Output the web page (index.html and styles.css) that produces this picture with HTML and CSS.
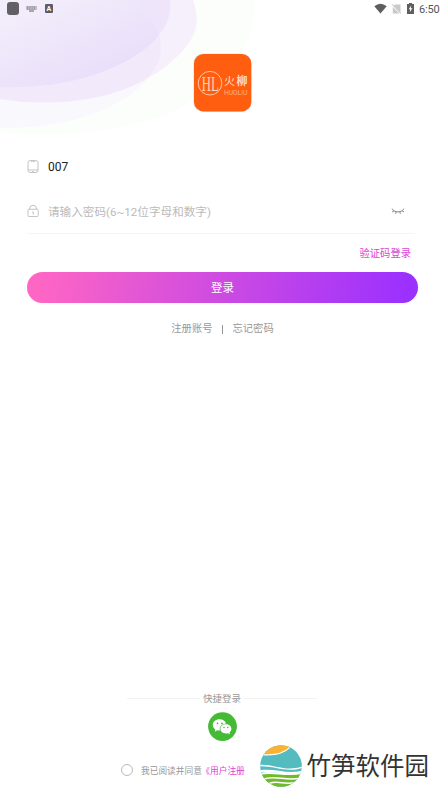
FILE: index.html
```
<!DOCTYPE html>
<html lang="zh-CN">
<head>
<meta charset="utf-8">
<title>登录</title>
<link rel="stylesheet" href="styles.css">
</head>
<body>
<div class="screen">
  <svg class="backdrop" width="270" height="140" viewBox="0 0 270 140" aria-hidden="true">
    <defs>
      <linearGradient id="inner" gradientUnits="userSpaceOnUse" x1="45" y1="-10" x2="85" y2="80">
        <stop offset="0" stop-color="#f3eefb"/><stop offset="1" stop-color="#eadffa"/>
      </linearGradient>
    </defs>
    <path fill="#fcfefc" d="M0 0H254C259 40 227 84 178 109C125 135 50 137 0 132Z"/>
    <path fill="#f9f8fd" d="M0 0H134C151 15 161 30 161 47C161 91 88 128 10 128H0Z"/>
    <path fill="#f6effc" d="M0 0H193C202 26 195 43 165 67C136 90 72 110 0 99Z"/>
    <path fill="#f2e9fb" d="M0 0H134C151 15 161 30 161 47C161 61 154 71 145 80C105 102 50 107 0 99Z"/>
    <path fill="#eee5fa" d="M0 0H170C173 22 158 41 133 57C101 77 52 89 0 87Z"/>
    <path fill="url(#inner)" d="M0 0H134C145 9 155 22 159 35Q151 46 133 57C101 77 52 89 0 87Z"/>
  </svg>

  <header class="status">
    <div class="status-group">
      <span class="app-chip"></span>
      <svg class="keyboard" width="11" height="6" viewBox="0 0 11 6"><path d="M.5 1H10.5M.5 3H10.5" stroke="#77747c" stroke-width="1.4" stroke-dasharray="1.4 .5"/><path d="M3 5H8" stroke="#77747c" stroke-width="1.2"/></svg>
      <svg width="8" height="9" viewBox="0 0 8 9"><rect width="8" height="9" rx="1" fill="#5f5d63"/><text x="1.4" y="7" class="badge-letter">A</text></svg>
    </div>
    <div class="status-group right">
      <svg width="13" height="11" viewBox="0 0 13 11"><path d="M.3 3.2Q6.5-1.8 12.7 3.2L6.5 10.5Z" fill="#5e5e5e"/></svg>
      <svg class="sim" width="9" height="10" viewBox="0 0 9 10"><path d="M3 .5H8.5V9.5H.8V3Z" fill="#c9c9c9"/><path d="M0 .8L8.8 10" stroke="#fff" stroke-width="1.6"/><path d="M0 .2L9 9.7" stroke="#aaa" stroke-width=".8"/></svg>
      <svg class="battery" width="7" height="11" viewBox="0 0 7 11"><path d="M2 0H5V1H7V11H0V1H2Z" fill="#5e5e5e"/><path d="M4.2 2.6L1.7 6.2H3.2L2.8 9.2L5.4 5.3H3.8Z" fill="#fff"/></svg>
      <span class="clock">6:50</span>
    </div>
  </header>

  <svg class="app-logo" width="60" height="60" viewBox="0 0 60 60">
    <rect x="1.3" y=".5" width="58.4" height="58.6" rx="10" fill="#e9e9e9"/>
    <rect x="2" y="1" width="57.3" height="57.4" rx="9.5" fill="#ff5e10"/>
    <circle cx="18" cy="30.2" r="11.8" fill="none" stroke="#ffd2b5" stroke-width=".9"/>
    <text x="9.8" y="37.6" textLength="17" lengthAdjust="spacingAndGlyphs" class="logo-mono">HL</text>
    <text x="32" y="32.4" textLength="23.5" class="logo-name">火<tspan class="strong">柳</tspan></text>
    <text x="32" y="41.6" textLength="23.4" lengthAdjust="spacingAndGlyphs" class="logo-text">HUOLIU</text>
  </svg>

  <main class="form">
    <div class="field account">
      <svg width="12" height="14" viewBox="0 0 12 14" fill="none" stroke="#c4c4c4"><rect x="1" y=".6" width="10" height="11.9" rx="2"/><path d="M1 10H11M4 1.3H8M5 11.8H7"/></svg>
      <span class="value">007</span>
    </div>
    <div class="field password">
      <svg width="12" height="14" viewBox="0 0 12 14" fill="none" stroke="#c4c4c4"><rect x="1" y="5.3" width="10.2" height="7.2" rx=".8"/><path d="M2.7 5.1V4Q3 1.3 6 1.3T9.3 4V5.1M5 8H6.3V10.7"/></svg>
      <span class="placeholder">请输入密码(6~12位字母和数字)</span>
      <svg class="eye" width="14" height="8" viewBox="0 0 14 8" fill="none" stroke="#888" stroke-width="1"><path d="M.8 1.6Q3 5 7 5T13.2 1.6M3.2 3.7L1 5M5.2 4.8L4.6 6.8M8.8 4.8L9.4 6.8M10.8 3.7L13 5"/></svg>
    </div>
    <a class="code-login">验证码登录</a>
    <button class="submit">登录</button>
    <nav class="links"><a>注册账号</a><i></i><a>忘记密码</a></nav>
  </main>

  <footer class="footer">
    <div class="quick"><i></i><span>快捷登录</span><i></i></div>
    <svg class="wechat" width="30" height="30" viewBox="0 0 30 30">
      <circle cx="15.5" cy="14.6" r="14.4" fill="#45ba35"/>
      <path fill="#fff" d="M12.6 7.2C8.6 7.2 5.8 9.7 5.8 12.9C5.8 14.8 6.8 16.3 8.3 17.4L7.7 19.7L10.2 18.3Q11.4 18.7 12.9 18.6C12 14.6 15 11.7 19.1 11.5C18.3 9 15.8 7.2 12.6 7.2Z"/>
      <path fill="#fff" d="M18.9 12.2C15.7 12.2 13.4 14.2 13.4 16.8C13.4 19.5 15.8 21.5 18.9 21.5Q20 21.5 21 21.2L23 22.3L22.5 20.3C23.8 19.4 24.4 18.2 24.4 16.8C24.4 14.2 22 12.2 18.9 12.2Z"/>
      <g fill="#45ba35"><circle cx="10.5" cy="11.3" r=".9"/><circle cx="15" cy="11.3" r=".9"/><circle cx="17" cy="15.5" r=".75"/><circle cx="20.7" cy="15.5" r=".75"/></g>
    </svg>
    <div class="bottom">
      <span class="radio"></span>
      <p class="agree">我已阅读并同意<b>《用户注册</b></p>
      <div class="brand">
        <svg width="42" height="42" viewBox="0 0 42 42">
          <defs><clipPath id="disc"><circle cx="21" cy="21" r="20.8"/></clipPath></defs>
          <g clip-path="url(#disc)">
            <rect width="42" height="42" fill="#54bbbf"/>
            <path fill="#f8b332" d="M0 0H34L30 3Q21 11 4 9.5H0Z"/>
            <path fill="none" stroke="#fff" stroke-width="1.2" d="M3 9.6Q21 11 29.5 2.6"/>
            <path fill="#fff" d="M0 19.7C14 19 26 27 42 21.5V23C27 28 15 21 0 21.3Z"/>
            <path fill="#fff" d="M0 25.2C14 23 27 29.5 42 25.8V27.5C27 31 15 26 0 27.3Z"/>
            <path fill="#72b92b" d="M0 29.5C14 25.5 25 31.5 42 27.8V42H0Z"/>
            <path fill="none" stroke="#fff" stroke-width="1.8" d="M0 28.8C14 25.8 25 31.5 42 28"/>
            <path fill="none" stroke="#fff" stroke-width="1.5" d="M3 34.2C16 29.5 25 36.5 40 33.2M9 38.5C18 35 24 40 35 37.5"/>
          </g>
        </svg>
        <span>竹笋软件园</span>
      </div>
    </div>
  </footer>
</div>
</body>
</html>
```
FILE: styles.css
```
* { box-sizing: border-box; }
body { margin: 0; background: #fff; font-family: Roboto, "Noto Sans CJK SC", sans-serif; }
svg { display: block; flex: none; }
.screen { position: relative; width: 445px; height: 791px; display: flex; flex-direction: column; overflow: hidden; }
.backdrop { position: absolute; left: 0; top: 0; z-index: -1; }

.status { height: 18px; padding: 0 6px 0 7px; display: flex; justify-content: space-between; align-items: center; }
.status-group { display: flex; align-items: center; margin-top: -1px; }
.app-chip { width: 12px; height: 13px; border-radius: 3px; background: #626066; }
.keyboard { margin: 0 8px 0 7px; }
.badge-letter { font: 700 7px Roboto, sans-serif; fill: #fff; }
.right .sim { margin: 0 6px 0 5px; }
.battery { margin-right: 5px; }
.clock { font-size: 11px; line-height: 16px; padding-top: 2px; width: 20px; letter-spacing: -.2px; color: #555; white-space: nowrap; }

.app-logo { margin: 35px 0 0 192px; }
.logo-mono { font: 20px "Liberation Serif", serif; fill: #ffd2b5; }
.logo-name { font: 11px "Noto Sans CJK SC", sans-serif; fill: #ffdcc5; }
.strong { font-weight: 700; }
.logo-text { font: 7px Roboto, sans-serif; fill: #ffb083; }

.form { margin: 36px 27px 0; display: flex; flex-direction: column; }
.field { display: flex; align-items: center; gap: 9px; }
.account { height: 36px; }
.value { font-size: 12px; color: #222; }
.password { height: 49px; margin-right: 3px; padding-top: 4px; border-bottom: 1px solid #f5f5f5; }
.placeholder { font-size: 11.6px; color: #bbb; white-space: nowrap; }
.eye { margin: 0 10px 0 auto; }
.code-login { align-self: flex-end; margin: 11px 7px 0 0; font-size: 10.3px; line-height: 18px; color: #dc43d4; }
.submit { height: 31px; margin-top: 9px; padding: 1px 0 0; border: 0; border-radius: 16px; background: linear-gradient(100deg, #ff66c4 3%, #9b30ff 97%); color: #fff; font: 11.5px/30px Roboto, "Noto Sans CJK SC", sans-serif; }
.links { display: flex; justify-content: center; align-items: center; margin-top: 17px; font-size: 10.3px; line-height: 18px; color: #999; }
.links i { width: 1px; height: 9px; margin: 0 9.5px; background: #999; }

.footer { margin-top: auto; display: flex; flex-direction: column; }
.quick { display: flex; align-items: center; gap: 3px; width: 190px; margin-left: 127px; font-size: 9.5px; line-height: 16px; color: #999; }
.quick i { flex: 1; height: 1px; margin-top: -1px; background: #f2f2f2; }
.wechat { margin: 5px 0 0 207px; }
.bottom { display: flex; align-items: center; height: 49px; padding-left: 121px; }
.radio { width: 12px; height: 12px; margin-top: 7px; border: 1px solid #bbb; border-radius: 50%; }
.agree { margin: 8px 0 0 8px; width: 104px; font-size: 8.7px; line-height: 16px; color: #999; white-space: nowrap; }
.agree b { color: #dc43d4; font-weight: 400; margin-left: -.5px; }
.brand { display: flex; align-items: center; gap: 5px; margin-left: 14.5px; margin-top: -2px; color: #333; font-size: 24.5px; line-height: 42px; white-space: nowrap; }
.brand span { padding-top: 2px; }
```
